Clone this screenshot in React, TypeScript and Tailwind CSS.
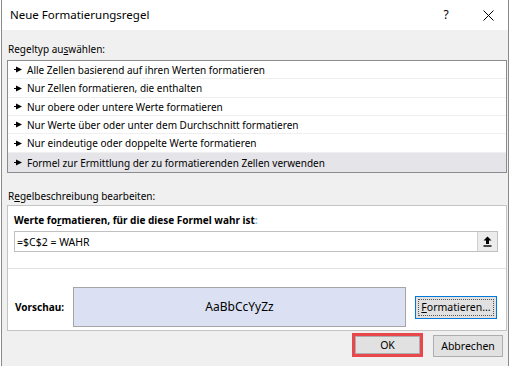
import React from "react";

const Marker = () => (
  <svg width="8" height="7" viewBox="0 0 8 7" className="shrink-0">
    <path d="M0 3.5H3" stroke="#000" strokeWidth="1" />
    <path d="M2 0.5L8 3.5L2 6.5Z" fill="#000" />
  </svg>
);

const rows = [
  { t: "Alle Zellen basierend auf ihren Werten formatieren", h: "h-[18px]" },
  { t: "Nur Zellen formatieren, die enthalten", h: "h-[19px]" },
  { t: "Nur obere oder untere Werte formatieren", h: "h-[18px]" },
  { t: "Nur Werte über oder unter dem Durchschnitt formatieren", h: "h-[18px]" },
  { t: "Nur eindeutige oder doppelte Werte formatieren", h: "h-[19px]" },
  { t: "Formel zur Ermittlung der zu formatierenden Zellen verwenden", h: "h-[19px]", sel: true },
];

export default function App() {
  return (
    <div className="w-[512px] h-[366px] bg-white overflow-hidden font-['Segoe_UI','Noto_Sans',sans-serif] text-[10px] text-black leading-[16px]">
      <div className="ml-[1px] w-[508px] h-[366px] border-x border-[#8a8a8a] bg-[#f0f0f0] flex flex-col">
        {/* Title bar */}
        <div className="h-[30px] bg-white flex items-center pl-[8px] shrink-0">
          <span className="text-[11.5px]">Neue Formatierungsregel</span>
          <div className="flex-1" />
          <span className="w-[10px] text-center mr-[32px] text-[12px]">?</span>
          <svg width="11" height="11" viewBox="0 0 11 11" className="mr-[14px]">
            <path d="M0.5 0.5L10.5 10.5M10.5 0.5L0.5 10.5" stroke="#000" strokeWidth="1" />
          </svg>
        </div>

        <div className="flex flex-col pl-[5px] pr-[1px]">
          <div className="pt-[11px] pl-[1px] mb-[3px]">
            Regeltyp au<u>s</u>wählen:
          </div>

          {/* List */}
          <div className="border border-[#8c8c8c] bg-white flex flex-col">
            {rows.map((r, i) => (
              <div
                key={i}
                className={`${r.h} flex items-center pl-[6px] gap-[5px] ${
                  i < rows.length - 1 ? "border-b border-[#efefef]" : ""
                } ${r.sel ? "bg-[#e4e4e9]" : ""}`}
              >
                <Marker />
                <span className="text-[10px] whitespace-nowrap">{r.t}</span>
              </div>
            ))}
          </div>

          <div className="mt-[15px] mb-[1px] pl-[1px]">
            R<u>e</u>gelbeschreibung bearbeiten:
          </div>

          {/* Panel */}
          <div className="border border-[#c4c4c4] bg-white flex flex-col h-[126px]">
            <div className="px-[6px] pt-[7px]">
              <div className="font-bold text-[10px] leading-[15px]">
                Werte fo<u>r</u>matieren, für die diese Formel wahr ist<span className="text-[#7fb2e5]">:</span>
              </div>
              <div className="mt-[3px] h-[21px] border border-[#c0c0c0] flex items-center mr-[2px]">
                <span className="pl-[2px] flex-1 text-[10.5px]">=$C$2 = WAHR</span>
                <div className="w-[20px] h-[19px] bg-[#ececec] border-l border-[#d0d0d0] flex items-center justify-center">
                  <svg width="9" height="11" viewBox="0 0 9 11">
                    <path d="M4.5 0.5L8.5 4.5H6V8H3V4.5H0.5Z" fill="#000" />
                    <path d="M0.5 10H8.5" stroke="#000" strokeWidth="1.4" />
                  </svg>
                </div>
              </div>
            </div>
            <div className="mt-[16px] border-t border-[#e2e2e2] flex items-center pl-[7px] pr-[9px] pt-[18px]">
              <span className="font-bold text-[10px] w-[58px]">Vorschau:</span>
              <div className="w-[333px] h-[40px] border border-[#a5a5a5] bg-[#dbe1f2] flex items-center justify-center text-[12px]">
                AaBbCcYyZz
              </div>
              <div className="flex-1" />
              <div className="w-[82px] h-[23px] border border-[#0078d7] bg-[#e1e1e1] flex items-center justify-center p-[2px]">
                <div className="w-full h-full border border-dotted border-[#555] flex items-center justify-center text-[10.5px]">
                  <span><u>F</u>ormatieren...</span>
                </div>
              </div>
            </div>
          </div>

          {/* Buttons */}
          <div className="flex justify-end items-start mt-[2px] pr-[4px]">
            <div className="w-[71px] h-[24px] border-[3px] border-[#e8474c] flex">
              <div className="flex-1 bg-[#e1e1e1] border border-[#adadad] flex items-center justify-center text-[10.5px]">
                OK
              </div>
            </div>
            <div className="ml-[10px] mt-[2px] w-[70px] h-[22px] bg-[#e1e1e1] border border-[#adadad] flex items-center justify-center text-[10.5px]">
              Abbrechen
            </div>
          </div>
        </div>
      </div>
    </div>
  );
}
